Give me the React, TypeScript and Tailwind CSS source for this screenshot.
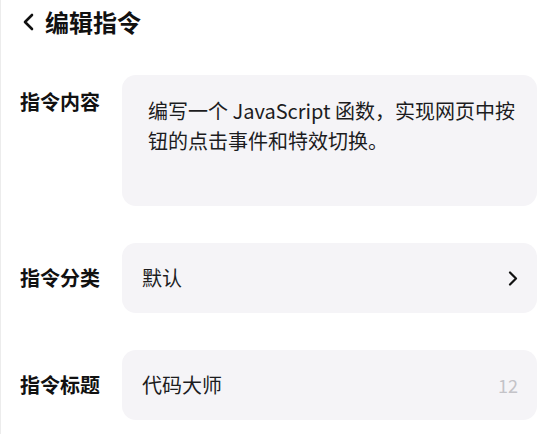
import React from 'react';

const font = { fontFamily: '"Noto Sans CJK SC", "Noto Sans", sans-serif' };

const Label = ({ children, top }: { children: React.ReactNode; top?: boolean }) => (
  <div
    className={`w-[102px] shrink-0 text-[20px] leading-[28px] font-bold text-[#111111] ${top ? 'pt-[13px]' : ''}`}
  >
    {children}
  </div>
);

export default function App() {
  return (
    <div
      className="w-[556px] h-[434px] bg-white border-l border-[#ececec] overflow-hidden"
      style={font}
    >
      <header className="h-[44px] flex items-center pl-[22px] gap-[11px]">
        <svg width="11" height="18" viewBox="0 0 11 18" fill="none">
          <polyline
            points="9,2 2,9 9,16"
            stroke="#111"
            strokeWidth="2.6"
            strokeLinecap="round"
            strokeLinejoin="round"
          />
        </svg>
        <h1 className="text-[24px] leading-[32px] font-bold text-[#111111]">编辑指令</h1>
      </header>

      <main className="mt-[31px] px-[19px] flex flex-col gap-[37px]">
        <div className="flex items-start">
          <Label top>指令内容</Label>
          <div className="flex-1 h-[131px] rounded-[14px] bg-[#f5f4f7] pt-[21px] pl-[26px] pr-[16px] text-[20px] leading-[30px] text-[#1c1c1e]">
            编写一个 JavaScript 函数，实现网页中按钮的点击事件和特效切换。
          </div>
        </div>

        <div className="flex items-center">
          <Label>指令分类</Label>
          <div className="flex-1 h-[70px] rounded-[14px] bg-[#f5f4f7] pl-[20px] pr-[19px] flex items-center justify-between">
            <span className="text-[20px] leading-[28px] text-[#1c1c1e]">默认</span>
            <svg width="10" height="15" viewBox="0 0 10 15" fill="none">
              <polyline
                points="2,1.5 8,7.5 2,13.5"
                stroke="#111"
                strokeWidth="2.2"
                strokeLinecap="round"
                strokeLinejoin="round"
              />
            </svg>
          </div>
        </div>

        <div className="flex items-center">
          <Label>指令标题</Label>
          <div className="flex-1 h-[70px] rounded-[14px] bg-[#f5f4f7] pl-[20px] pr-[19px] flex items-center justify-between">
            <span className="text-[20px] leading-[28px] text-[#1c1c1e]">代码大师</span>
            <span className="text-[18px] leading-[24px] text-[#c4c3c8]">12</span>
          </div>
        </div>
      </main>
    </div>
  );
}
